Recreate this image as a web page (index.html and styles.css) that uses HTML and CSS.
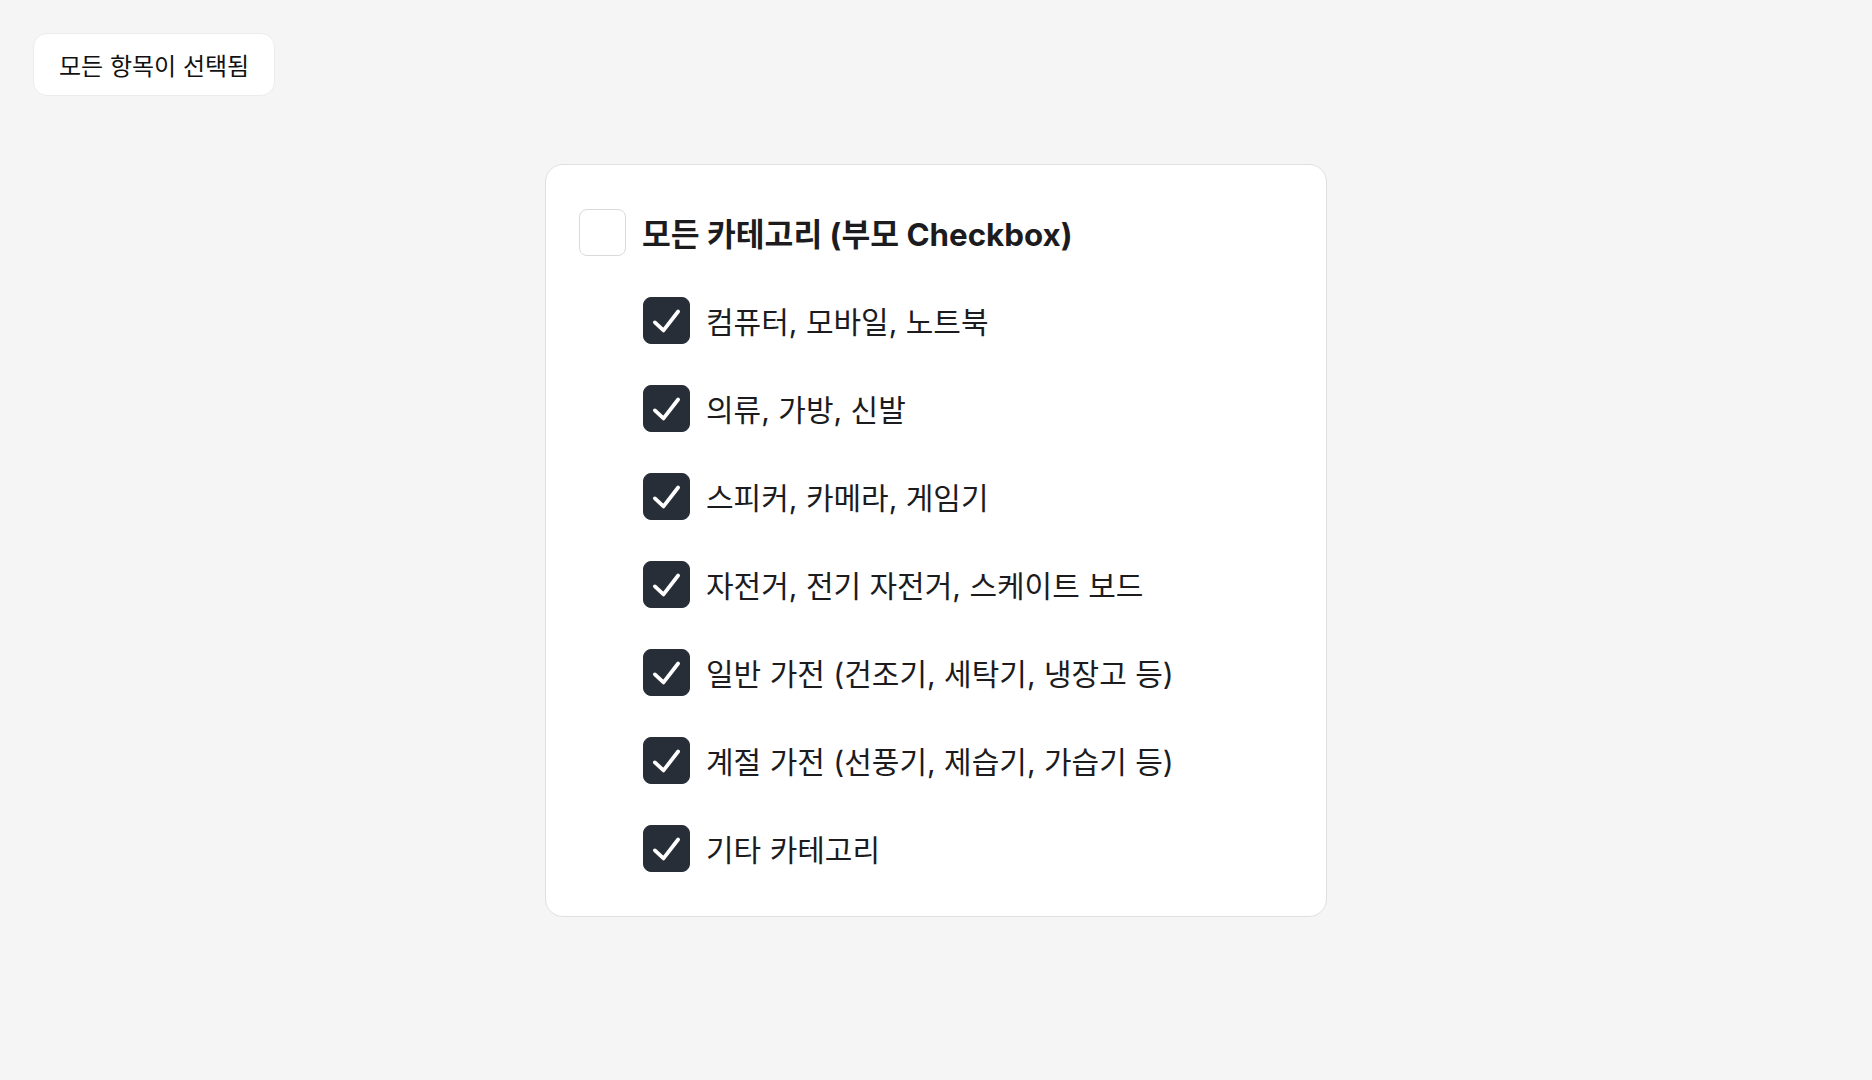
FILE: index.html
```html
<!DOCTYPE html>
<html lang="ko">
<head>
  <meta charset="UTF-8" />
  <meta name="viewport" content="width=device-width, initial-scale=1.0" />
  <title>카테고리 선택</title>
  <link rel="stylesheet" href="styles.css">
</head>
<body>

  <div class="status">모든 항목이 선택됨</div>

  <div class="card">
    <div class="row parent">
      <span class="box"></span>
      <span class="label">모든 카테고리 (부모 Checkbox)</span>
    </div>

    <div class="row child">
      <span class="box checked"><svg viewBox="0 0 24 24"><polyline points="5.8,13 10.4,17.3 18.2,7.2" /></svg></span>
      <span class="label">컴퓨터, 모바일, 노트북</span>
    </div>
    <div class="row child">
      <span class="box checked"><svg viewBox="0 0 24 24"><polyline points="5.8,13 10.4,17.3 18.2,7.2" /></svg></span>
      <span class="label">의류, 가방, 신발</span>
    </div>
    <div class="row child">
      <span class="box checked"><svg viewBox="0 0 24 24"><polyline points="5.8,13 10.4,17.3 18.2,7.2" /></svg></span>
      <span class="label">스피커, 카메라, 게임기</span>
    </div>
    <div class="row child">
      <span class="box checked"><svg viewBox="0 0 24 24"><polyline points="5.8,13 10.4,17.3 18.2,7.2" /></svg></span>
      <span class="label">자전거, 전기 자전거, 스케이트 보드</span>
    </div>
    <div class="row child">
      <span class="box checked"><svg viewBox="0 0 24 24"><polyline points="5.8,13 10.4,17.3 18.2,7.2" /></svg></span>
      <span class="label">일반 가전 (건조기, 세탁기, 냉장고 등)</span>
    </div>
    <div class="row child">
      <span class="box checked"><svg viewBox="0 0 24 24"><polyline points="5.8,13 10.4,17.3 18.2,7.2" /></svg></span>
      <span class="label">계절 가전 (선풍기, 제습기, 가습기 등)</span>
    </div>
    <div class="row child">
      <span class="box checked"><svg viewBox="0 0 24 24"><polyline points="5.8,13 10.4,17.3 18.2,7.2" /></svg></span>
      <span class="label">기타 카테고리</span>
    </div>
  </div>

</body>
</html>
```

FILE: styles.css
```css
html, body {
  margin: 0;
  padding: 0;
  height: 100%;
}
body {
  background: #f5f5f5;
  color: #1c1c1e;
  font-family: Inter, "Noto Sans CJK KR", sans-serif;
  display: flex;
  align-items: center;
  justify-content: center;
}
.status {
  position: absolute;
  top: 33px;
  left: 33px;
  height: 63px;
  box-sizing: border-box;
  padding: 0 25px;
  display: flex;
  align-items: center;
  background: #fff;
  border: 1px solid #ececec;
  border-radius: 14px;
  font-size: 24px;
  color: #111;
}
.card {
  width: 782px;
  box-sizing: border-box;
  padding: 44px 33px;
  background: #fff;
  border: 1.5px solid #e0e0e0;
  border-radius: 18px;
  display: flex;
  flex-direction: column;
  gap: 41px;
}
.row {
  display: flex;
  align-items: center;
  gap: 16px;
  height: 47px;
  font-size: 30px;
}
.parent .label {
  font-size: 31.3px;
  font-weight: 700;
}
.child {
  padding-left: 64px;
}
.box {
  width: 47px;
  height: 47px;
  box-sizing: border-box;
  border: 1.5px solid #d9dadd;
  border-radius: 8px;
  background: #fff;
  flex-shrink: 0;
}
.box.checked {
  background: #282e37;
  border-color: #282e37;
  display: flex;
  align-items: center;
  justify-content: center;
}
.box svg {
  width: 47px;
  height: 47px;
  fill: none;
  stroke: #fff;
  stroke-width: 2;
  stroke-linecap: round;
  stroke-linejoin: round;
}
```
